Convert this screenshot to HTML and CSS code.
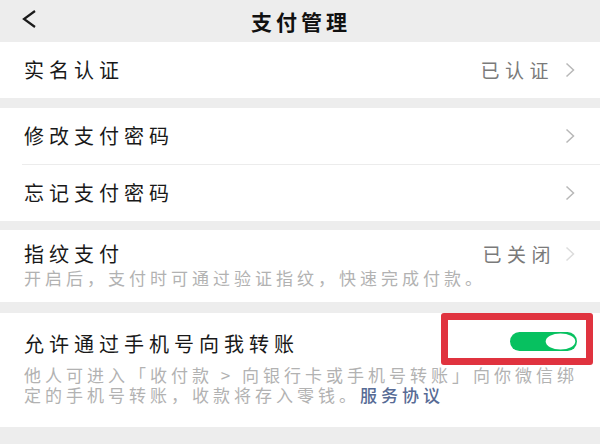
FILE: index.html
```html
<!DOCTYPE html>
<html lang="zh-CN">
<head>
<meta charset="utf-8">
<title>支付管理</title>
<link rel="stylesheet" href="styles.css">
</head>
<body>
<div class="page">
  <header class="nav">
    <svg class="back" width="16" height="20" viewBox="0 0 16 20"><polyline points="14,2 3,10 14,18" fill="none" stroke="#1a1a1a" stroke-width="2.2" stroke-linejoin="miter"/></svg>
    <div class="title">支付管理</div>
  </header>

  <section class="group g1">
    <div class="row">
      <span class="label">实名认证</span>
      <span class="value">已认证</span>
      <svg class="chev" width="10" height="16" viewBox="0 0 10 16"><polyline points="1.5,1.5 8.5,8 1.5,14.5" fill="none" stroke="#b8b8b8" stroke-width="1.5"/></svg>
    </div>
  </section>

  <section class="group g2">
    <div class="row">
      <span class="label">修改支付密码</span>
      <svg class="chev" width="10" height="16" viewBox="0 0 10 16"><polyline points="1.5,1.5 8.5,8 1.5,14.5" fill="none" stroke="#b8b8b8" stroke-width="1.5"/></svg>
    </div>
    <div class="row sep">
      <span class="label">忘记支付密码</span>
      <svg class="chev" width="10" height="16" viewBox="0 0 10 16"><polyline points="1.5,1.5 8.5,8 1.5,14.5" fill="none" stroke="#b8b8b8" stroke-width="1.5"/></svg>
    </div>
  </section>

  <section class="group g3">
    <div class="head">
      <span class="label">指纹支付</span>
      <span class="value">已关闭</span>
      <svg class="chev" width="10" height="16" viewBox="0 0 10 16"><polyline points="1.5,1.5 8.5,8 1.5,14.5" fill="none" stroke="#dcdcdc" stroke-width="1.5"/></svg>
    </div>
    <p class="desc">开启后，支付时可通过验证指纹，快速完成付款。</p>
  </section>

  <section class="group g4">
    <div class="head">
      <span class="label">允许通过手机号向我转账</span>
      <svg class="toggle" width="67" height="19" viewBox="0 0 67 19"><rect x="0" y="0" width="67" height="19" rx="9.5" fill="#07c160"/><ellipse cx="50.5" cy="9.5" rx="14.8" ry="8" fill="#ffffff"/></svg>
    </div>
    <div class="desc2">
      <div class="line">他人可进入「收付款 &gt; 向银行卡或手机号转账」向你微信绑</div>
      <div class="line">定的手机号转账，收款将存入零钱。<a class="link">服务协议</a></div>
    </div>
    <div class="mark"></div>
  </section>
</div>
</body>
</html>
```

FILE: styles.css
```css
* { box-sizing: border-box; }
html, body {
  margin: 0;
  padding: 0;
  background: #ededed;
}
body {
  width: 600px;
  height: 444px;
  overflow: hidden;
  font-family: "Noto Sans CJK SC", "Noto Sans", sans-serif;
  color: #191919;
}
.page {
  display: flex;
  flex-direction: column;
}
.nav {
  position: relative;
  height: 42px;
  background: #ededed;
  display: flex;
  align-items: center;
  justify-content: center;
}
.back {
  position: absolute;
  left: 21px;
  top: 9px;
}
.title {
  font-size: 21px;
  font-weight: 700;
  letter-spacing: 4px;
  line-height: 42px;
  padding-left: 2px;
  color: #111;
}
.group {
  background: #fff;
}
.g1 { height: 56px; }
.g2 { margin-top: 10px; }
.g3 { margin-top: 9px; padding: 12px 24px 12px 24px; height: 72px; }
.g4 { margin-top: 11px; padding: 19px 23px 22px 24px; height: 114px; position: relative; }

.row {
  height: 56px;
  display: flex;
  align-items: center;
  padding: 0 25px 0 24px;
}
.row.sep {
  height: 57px;
  border-top: 1px solid #ececec;
  margin-left: 22px;
  padding-left: 2px;
}
.label {
  font-size: 20px;
  letter-spacing: 5px;
  line-height: 24px;
  flex: 1;
  white-space: nowrap;
}
.value {
  font-size: 19px;
  letter-spacing: 5.5px;
  color: #7a7a7a;
  line-height: 24px;
  margin-right: 11px;
}
.chev { display: block; flex: none; }
.head {
  display: flex;
  align-items: center;
  height: 24px;
}
.g3 .head { padding-right: 1px; }
.g3 .value { margin-right: 9px; }
.desc {
  margin: 0;
  font-size: 17px;
  letter-spacing: 4px;
  line-height: 24px;
  color: #b2b2b2;
  white-space: nowrap;
}
.desc2 {
  margin-top: 9px;
  display: flex;
  flex-direction: column;
}
.line {
  font-size: 17px;
  letter-spacing: 4px;
  line-height: 20px;
  height: 20px;
  color: #b2b2b2;
  white-space: nowrap;
}
.link {
  color: #576b95;
  font-weight: 500;
}
.toggle {
  display: block;
  flex: none;
  margin-top: -6px;
}
.mark {
  position: absolute;
  left: 441px;
  top: 0;
  width: 152px;
  height: 52px;
  border: 7px solid #e0333f;
  border-radius: 3px;
}
```
